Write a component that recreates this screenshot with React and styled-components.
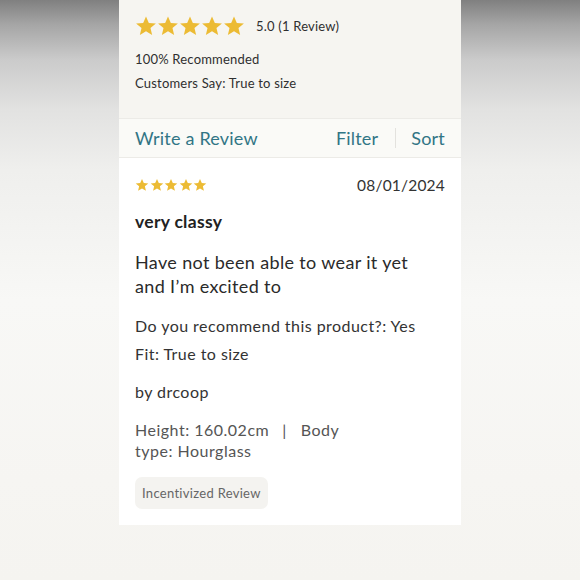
import React from 'react';
import styled, { createGlobalStyle } from 'styled-components';

const GlobalStyle = createGlobalStyle`
  html, body {
    margin: 0;
    padding: 0;
  }
  body {
    font-family: Lato, "Noto Sans", sans-serif;
    background: linear-gradient(180deg, #808080 0px, #a6a6a6 25px, #cbcbcb 60px, #e2e2e1 110px, #efefed 170px, #f8f8f6 300px, #f6f5f2 480px, #f5f4f0 580px);
    min-height: 580px;
  }
`;

const Page = styled.div`
  width: 580px;
  height: 580px;
  display: flex;
  justify-content: center;
`;

const Column = styled.div`
  width: 342px;
  display: flex;
  flex-direction: column;
`;

const Summary = styled.div`
  background: #f6f5f1;
  padding: 14px 16px 0 16px;
  height: 104px;
  display: flex;
  flex-direction: column;
`;

const RatingRow = styled.div`
  display: flex;
  align-items: center;
  gap: 11px;
  height: 24px;
  margin-bottom: 9px;
`;

const Stars = styled.div`
  display: flex;
  gap: ${p => p.gap}px;
`;

const SummaryText = styled.div`
  font-size: 13px;
  color: #2f2f2f;
  letter-spacing: 0.2px;
  line-height: 24px;
`;

const Toolbar = styled.div`
  background: #fafaf7;
  border-top: 1px solid #ecebe7;
  border-bottom: 1px solid #ecebe7;
  height: 38px;
  padding: 0 16px;
  display: flex;
  align-items: center;
`;

const ToolLink = styled.span`
  font-size: 18px;
  color: #317585;
  letter-spacing: 0.2px;
  flex: ${p => (p.grow ? 1 : 'none')};
`;

const Divider = styled.span`
  width: 1px;
  height: 20px;
  background: #e3e2de;
  margin: 0 15px 0 17px;
`;

const Card = styled.div`
  background: #fff;
  padding: 17px 16px 16px 16px;
  display: flex;
  flex-direction: column;
`;

const CardHead = styled.div`
  display: flex;
  justify-content: space-between;
  align-items: center;
  height: 20px;
`;

const DateText = styled.span`
  font-size: 15.5px;
  color: #333;
  letter-spacing: 0.2px;
`;

const Title = styled.div`
  margin-top: 16px;
  font-size: 17.5px;
  font-weight: 700;
  color: #222;
  letter-spacing: 0.3px;
`;

const Body = styled.div`
  margin-top: 18px;
  font-size: 18px;
  line-height: 24px;
  color: #2a2a2a;
  max-width: 295px;
  letter-spacing: 0.35px;
`;

const Meta = styled.div`
  font-size: 16px;
  color: #333;
  letter-spacing: 0.45px;
  margin-top: ${p => p.top}px;
  line-height: 20px;
`;

const Traits = styled.div`
  margin-top: 17px;
  font-size: 16px;
  line-height: 21px;
  color: #555;
  letter-spacing: 0.5px;
  max-width: 225px;
`;

const Sep = styled.span`
  margin: 0 14px 0 13px;
`;

const Badge = styled.div`
  margin-top: 16px;
  align-self: flex-start;
  background: #f4f3f0;
  border-radius: 7px;
  padding: 0 7px;
  height: 32px;
  display: flex;
  align-items: center;
  font-size: 13px;
  color: #666;
  letter-spacing: 0.3px;
`;

const Star = ({ size }) => (
  <svg width={size} height={size} viewBox="0 0 24 24">
    <path
      d="M12 1.5l3.1 7.2 7.7.6-5.9 5 1.8 7.6L12 17.8l-6.7 4.1 1.8-7.6-5.9-5 7.7-.6z"
      fill="#ecbb34"
    />
  </svg>
);

const StarRow = ({ size, gap }) => (
  <Stars gap={gap}>
    {[0, 1, 2, 3, 4].map(i => <Star key={i} size={size} />)}
  </Stars>
);

export default function App() {
  return (
    <>
      <GlobalStyle />
      <Page>
        <Column>
          <Summary>
            <RatingRow>
              <StarRow size={22} gap={0} />
              <SummaryText>5.0 (1 Review)</SummaryText>
            </RatingRow>
            <SummaryText>100% Recommended</SummaryText>
            <SummaryText>Customers Say: True to size</SummaryText>
          </Summary>
          <Toolbar>
            <ToolLink grow>Write a Review</ToolLink>
            <ToolLink>Filter</ToolLink>
            <Divider />
            <ToolLink>Sort</ToolLink>
          </Toolbar>
          <Card>
            <CardHead>
              <StarRow size={14} gap={0.5} />
              <DateText>08/01/2024</DateText>
            </CardHead>
            <Title>very classy</Title>
            <Body>Have not been able to wear it yet and I’m excited to</Body>
            <Meta top={18}>Do you recommend this product?: Yes</Meta>
            <Meta top={8}>Fit: True to size</Meta>
            <Meta top={18}>by drcoop</Meta>
            <Traits>
              Height: 160.02cm<Sep>|</Sep>Body type: Hourglass
            </Traits>
            <Badge>Incentivized Review</Badge>
          </Card>
        </Column>
      </Page>
    </>
  );
}
